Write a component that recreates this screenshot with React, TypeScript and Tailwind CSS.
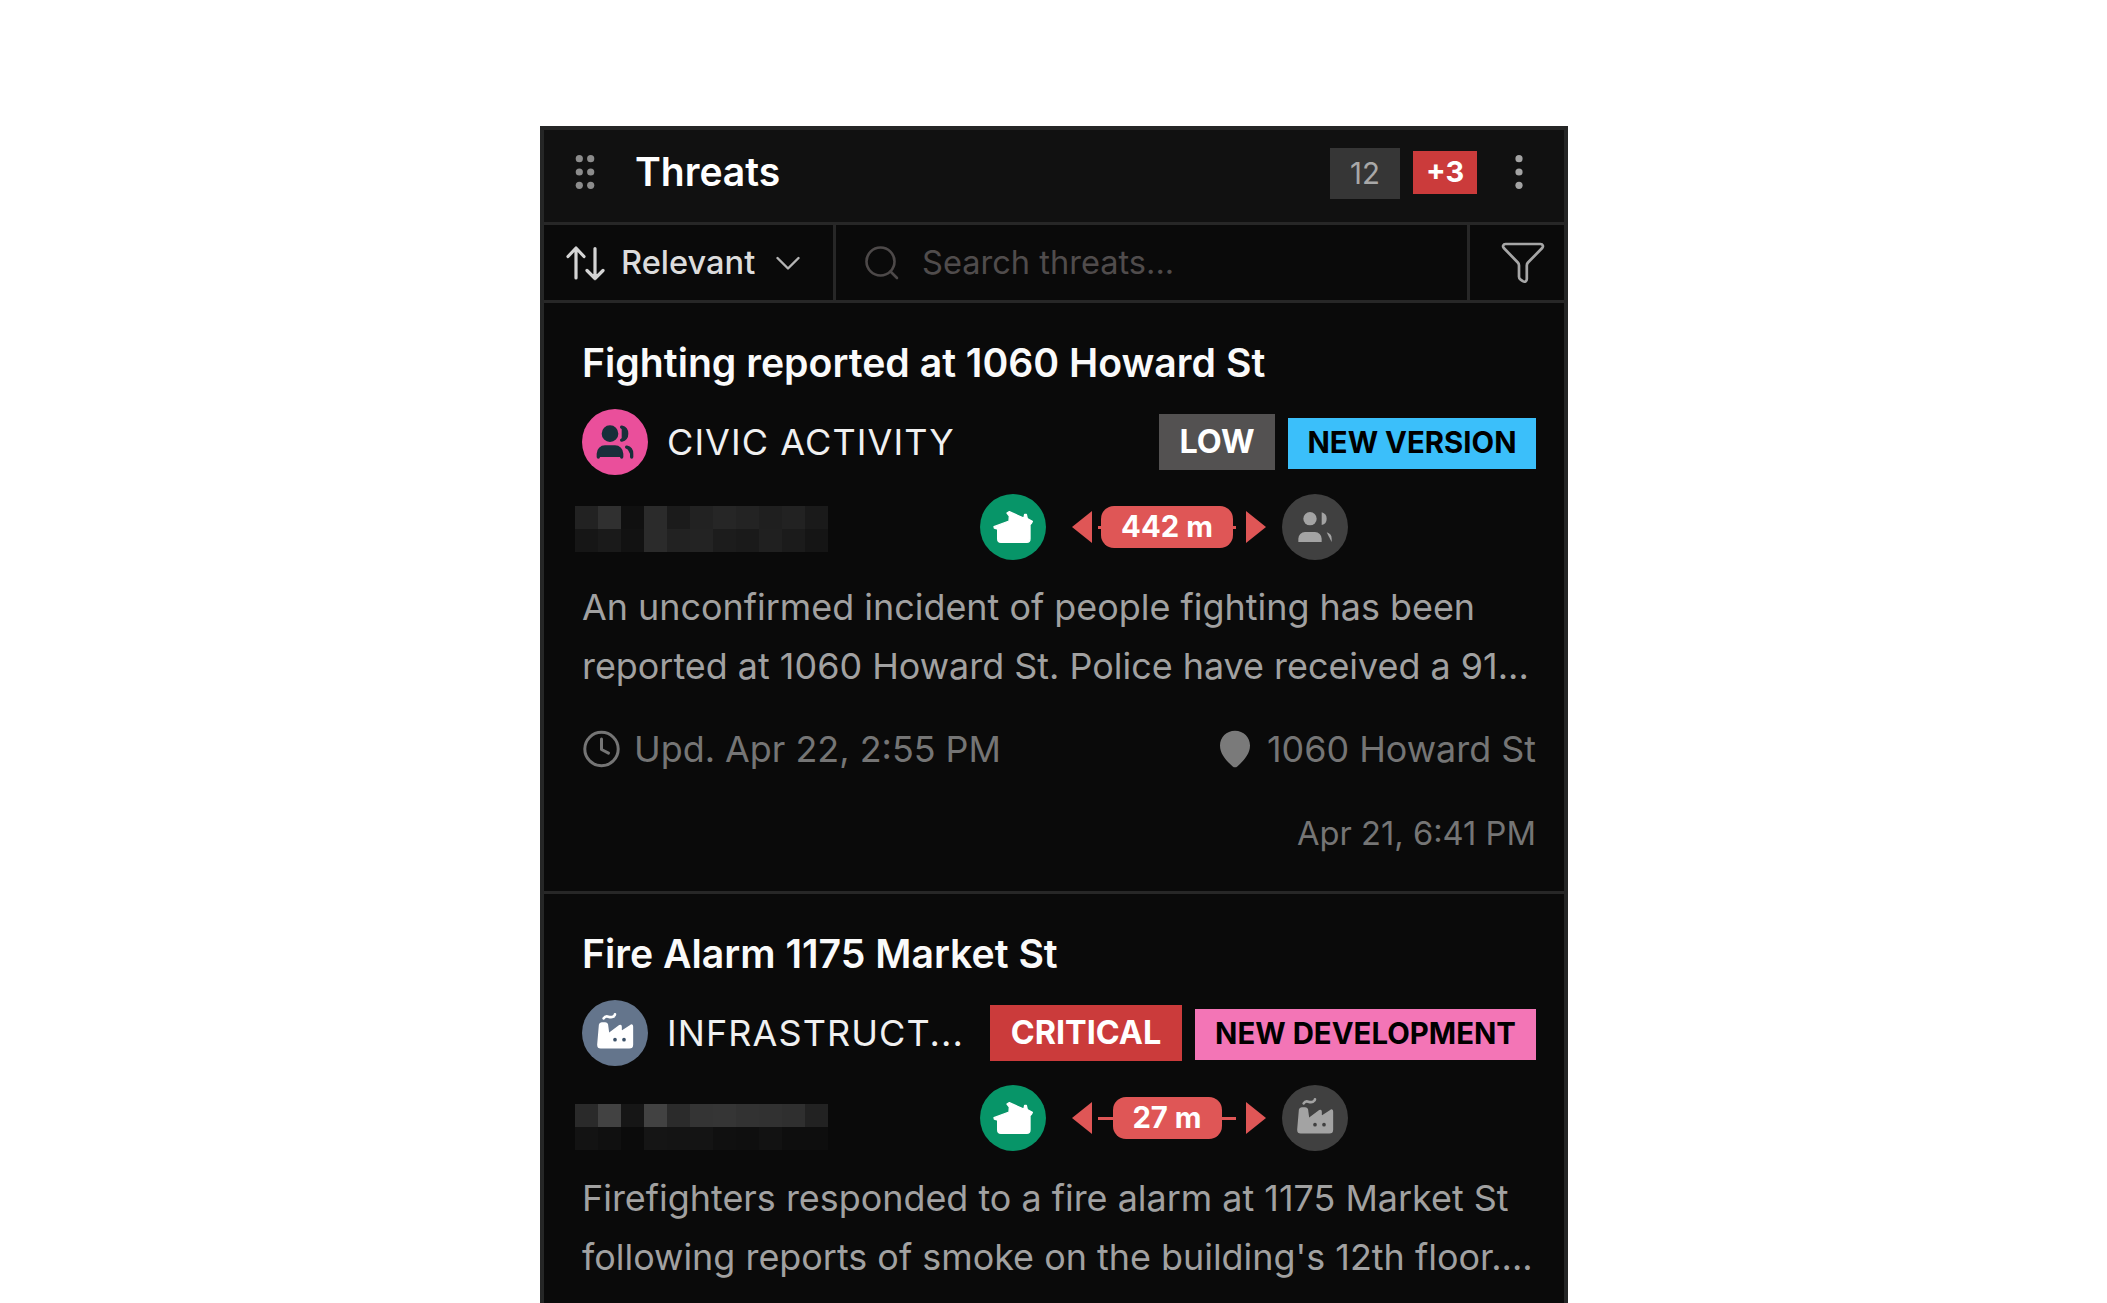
import type { ReactNode } from "react";
import { Users } from "lucide-react";

const GripIcon = () => (
  <svg className="h-9 w-5 fill-[#8c8c8c]" viewBox="0 0 20 36">
    {[4.7, 18, 31.3].map((y) => (
      <g key={y}>
        <circle cx="4.3" cy={y} r="3.6" />
        <circle cx="15.7" cy={y} r="3.6" />
      </g>
    ))}
  </svg>
);

const KebabIcon = () => (
  <svg className="h-9 w-2 fill-[#a3a3a3]" viewBox="0 0 8 36">
    {[4.7, 18, 31.3].map((y) => (
      <circle key={y} cx="4" cy={y} r="3.6" />
    ))}
  </svg>
);

const SortIcon = () => (
  <svg className="h-9 w-10 fill-none stroke-[#d4d4d4] stroke-[3.2]" viewBox="0 0 40 36" strokeLinecap="round" strokeLinejoin="round">
    <path d="M3 11.500 11 3l8 8.500M11 3v30M22 25.500l8 8 8-8M30 33.500v-30" />
  </svg>
);

const ChevronIcon = () => (
  <svg className="h-4 w-6 fill-none stroke-[#b5b5b5] stroke-[2.4]" viewBox="0 0 24 16" strokeLinecap="round" strokeLinejoin="round">
    <path d="m1.500 3 10.500 10.500L22.500 3" />
  </svg>
);

const SearchIcon = () => (
  <svg className="h-9 w-9 fill-none stroke-[#4d4949] stroke-[2.6]" viewBox="0 0 36 36" strokeLinecap="round">
    <circle cx="16.500" cy="16.500" r="14" />
    <path d="m26.500 26.500 6.500 6.500" />
  </svg>
);

const FilterIcon = () => (
  <svg className="h-[42px] w-11 fill-none stroke-[#a6a6a6] stroke-[2.7]" viewBox="0 0 44 42" strokeLinejoin="round">
    <path d="M4.500 2h35c2.300 0 3.200 2.400 1.700 4L27 20.500c-.8.900-1.200 1.800-1.200 3V37c0 2.500-2 3.400-4 2.200l-2.200-1.500c-1.200-.8-1.600-1.700-1.600-3V23.500c0-1.200-.4-2.100-1.200-3L2.800 6C1.300 4.400 2.200 2 4.500 2Z" />
  </svg>
);

const ClockIcon = () => (
  <svg className="h-[38px] w-[38px] fill-none stroke-[#757575] stroke-[3]" viewBox="0 0 38 38" strokeLinecap="round" strokeLinejoin="round">
    <circle cx="19.500" cy="19" r="16.700" />
    <path d="M19.500 9v10.500l7 3.600" />
  </svg>
);

const PinIcon = () => (
  <svg className="h-[38px] w-8 fill-[#7a7a7a]" viewBox="0 0 32 38">
    <path d="M16 .8C7.400.8 1 7.300 1 15.500c0 8.300 6.400 15.500 12.700 20.900 1.400 1.200 3.200 1.200 4.600 0C24.600 31 31 23.800 31 15.500 31 7.300 24.600.8 16 .8Z" />
  </svg>
);

const HouseIcon = () => (
  <svg className="size-full fill-white stroke-white stroke-[4]" viewBox="0 0 198 198" strokeLinejoin="round">
    <path d="M42 98 87 81 88 66 81 57 88 53 128 71 132 70 134 61 139 61 142 74 157 82 154 88 150 92V134Q150 145 140 145H63Q53 145 53 134V105L43 102Z" />
  </svg>
);

const FactoryIcon = ({ muted = false }: { muted?: boolean }) => (
  <svg
    className={muted ? "size-full fill-[#a3a3a3] stroke-[#a3a3a3]" : "size-full fill-white stroke-white"}
    viewBox="0 0 198 198"
    strokeLinecap="round"
    strokeLinejoin="round"
  >
    <path strokeWidth="5" d="M53 75Q54 69 59 69H69Q75 69 76 75L79 98Q80 102 84 99L113 77Q117 75 117 80V96L147 76Q151 74 151 80V134Q151 143 142 143H56Q48 143 48 134Z" />
    <path strokeWidth="8" fill="none" d="M65 55Q70 47 79 50T93 50Q99 48 99 43" />
    <g stroke="none" className={muted ? "fill-[#404040]" : "fill-[#3d5269]"}>
      <circle cx="99" cy="119" r="5.500" />
      <circle cx="126" cy="119" r="5.500" />
    </g>
  </svg>
);

const Circle = ({ className, children }: { className: string; children: ReactNode }) => (
  <div className={`flex size-[66px] shrink-0 items-center justify-center rounded-full ${className}`}>{children}</div>
);

const Mosaic = ({ rows, className }: { rows: string[][]; className: string }) => (
  <div className={`-ml-[7px] w-[253px] shrink-0 self-start ${className}`}>
    {rows.map((row, r) => (
      <div key={r} className="flex">
        {row.map((c, i) => (
          <div key={i} className="h-[23px] w-[23px]" style={{ backgroundColor: c }} />
        ))}
      </div>
    ))}
  </div>
);

const Distance = ({ label, pill }: { label: string; pill: string }) => (
  <div className="ml-[26px] flex items-center">
    <div className="h-0 w-0 border-y-[16.500px] border-r-[20px] border-y-transparent border-r-[#df5656]" />
    <div className="relative ml-1.5 flex w-[138px] items-center justify-center">
      <div className="absolute inset-x-0 h-[3px] bg-[#df5656]" />
      <div className={`relative flex h-[42px] items-center justify-center rounded-[13px] bg-[#df5656] text-[29.300px] font-bold text-white ${pill}`}>
        {label}
      </div>
    </div>
    <div className="ml-2.5 h-0 w-0 border-y-[16.500px] border-l-[20px] border-y-transparent border-l-[#df5656]" />
  </div>
);

type CardProps = {
  title: string;
  category: string;
  badge: ReactNode;
  severity: ReactNode;
  status: ReactNode;
  mosaic: ReactNode;
  distance: ReactNode;
  target: ReactNode;
  lines: string[];
  footer?: ReactNode;
};

const Card = (p: CardProps) => (
  <article className="h-[591px] shrink-0 border-b-[3px] border-[#272727] pt-[30px] pr-[28px] pl-[38px] whitespace-nowrap">
    <h2 className="text-[39.200px] leading-[59px] font-semibold text-[#fafafa]">{p.title}</h2>
    <div className="mt-[17px] flex h-[66px] items-center">
      {p.badge}
      <span className="ml-[19px] text-[36px] tracking-[0.03em] text-[#f0f0f0]">{p.category}</span>
      <div className="ml-auto flex items-center gap-[13px]">
        {p.severity}
        {p.status}
      </div>
    </div>
    <div className="mt-[19px] flex h-[66px] items-center">
      {p.mosaic}
      <Circle className="ml-[152px] bg-[#079568]">
        <HouseIcon />
      </Circle>
      {p.distance}
      {p.target}
    </div>
    <p className="mt-[18px] text-[35.920px] leading-[59px] text-[#a1a1a1]">
      {p.lines.map((l) => (
        <span key={l} className="block">
          {l}
        </span>
      ))}
    </p>
    {p.footer}
  </article>
);

const mosaicOne = [
  ["#222222", "#303030", "#101010", "#2b2b2b", "#1b1b1b", "#222222", "#262626", "#232323", "#1f1f1f", "#222222", "#1a1a1a"],
  ["#161616", "#1a1a1a", "#121212", "#2b2b2b", "#222222", "#232323", "#1c1c1c", "#1a1a1a", "#202020", "#1b1b1b", "#151515"],
];
const mosaicTwo = [
  ["#2a2a2a", "#424242", "#161616", "#424242", "#2b2b2b", "#343434", "#353535", "#323232", "#313131", "#2f2f2f", "#222222"],
  ["#131313", "#101010", "#0b0b0b", "#151515", "#141414", "#141414", "#101010", "#0f0f0f", "#121212", "#0e0e0e", "#0e0e0e"],
];

export default function App() {
  return (
    <div className="flex h-[1303px] justify-center overflow-hidden bg-white pt-[126px] font-['Inter',sans-serif]">
      <section className="ml-px flex w-[1028px] flex-col overflow-hidden border-4 border-b-0 border-[#252626] bg-[#0a0a0a]">
        <header className="flex h-[95px] shrink-0 items-center border-b-[3px] border-[#272727] bg-[#111111] pr-[41px] pb-2 pl-[31px]">
          <GripIcon />
          <h1 className="ml-10 text-[39.100px] font-semibold text-white">Threats</h1>
          <div className="ml-auto flex items-center">
            <span className="mt-0.5 flex h-[51px] w-[70px] items-center justify-center bg-[#363636] text-[29.500px] text-[#a8a8a8]">12</span>
            <span className="ml-[13px] flex h-[43px] w-16 items-center justify-center bg-[#cb3b3b] text-[29px] font-bold text-white">+3</span>
            <span className="ml-[38px]">
              <KebabIcon />
            </span>
          </div>
        </header>

        <div className="flex h-[78px] shrink-0 border-b-[3px] border-[#272727]">
          <button className="flex w-[292px] items-center border-r-[3px] border-[#272727] pl-[21px] text-[32.600px] font-medium text-[#dcdcdc]">
            <SortIcon />
            <span className="ml-4">Relevant</span>
            <span className="ml-[21px]">
              <ChevronIcon />
            </span>
          </button>
          <div className="flex flex-1 items-center pl-7 text-[32.600px] text-[#504c4c]">
            <SearchIcon />
            <span className="ml-[22px]">Search threats...</span>
          </div>
          <button className="flex w-[97px] items-center border-l-[3px] border-[#272727] pl-[31px]">
            <FilterIcon />
          </button>
        </div>

        <Card
          title="Fighting reported at 1060 Howard St"
          category="CIVIC ACTIVITY"
          badge={
            <Circle className="bg-[#ea4f9b]">
              <Users className="size-10 fill-[#182f3a] stroke-[#182f3a]" />
            </Circle>
          }
          severity={<span className="flex h-14 w-[116px] items-center justify-center bg-[#535151] text-[32.400px] font-bold text-white">LOW</span>}
          status={
            <span className="mt-0.5 flex h-[51px] w-[248px] items-center justify-center bg-[#3bbffa] text-[29.350px] font-bold text-black">NEW VERSION</span>
          }
          mosaic={<Mosaic rows={mosaicOne} className="mt-3" />}
          distance={<Distance label="442 m" pill="w-[132px]" />}
          target={
            <Circle className="ml-4 bg-[#404040]">
              <Users className="size-10 fill-[#a3a3a3] stroke-none" />
            </Circle>
          }
          lines={["An unconfirmed incident of people fighting has been", "reported at 1060 Howard St. Police have received a 91..."]}
          footer={
            <>
              <div className="mt-[34px] flex h-[38px] items-center justify-between text-[35.900px] text-[#757575]">
                <div className="flex items-center">
                  <ClockIcon />
                  <span className="mt-0.5 ml-3.5">Upd. Apr 22, 2:55 PM</span>
                </div>
                <div className="flex items-center">
                  <PinIcon />
                  <span className="mt-0.5 ml-4">1060 Howard St</span>
                </div>
              </div>
              <div className="mt-[45px] text-right text-[32.700px] leading-10 text-[#757575]">Apr 21, 6:41 PM</div>
            </>
          }
        />

        <Card
          title="Fire Alarm 1175 Market St"
          category="INFRASTRUCT..."
          badge={
            <Circle className="bg-[#64758c]">
              <FactoryIcon />
            </Circle>
          }
          severity={<span className="flex h-14 w-[192px] items-center justify-center bg-[#cb3b3b] text-[32.400px] font-bold text-white">CRITICAL</span>}
          status={
            <span className="mt-0.5 flex h-[51px] w-[341px] items-center justify-center bg-[#f375b6] text-[29.350px] font-bold text-black">NEW DEVELOPMENT</span>
          }
          mosaic={<Mosaic rows={mosaicTwo} className="mt-[19px]" />}
          distance={<Distance label="27 m" pill="w-[109px]" />}
          target={
            <Circle className="ml-4 bg-[#404040]">
              <FactoryIcon muted />
            </Circle>
          }
          lines={["Firefighters responded to a fire alarm at 1175 Market St", "following reports of smoke on the building's 12th floor...."]}
        />
      </section>
    </div>
  );
}
